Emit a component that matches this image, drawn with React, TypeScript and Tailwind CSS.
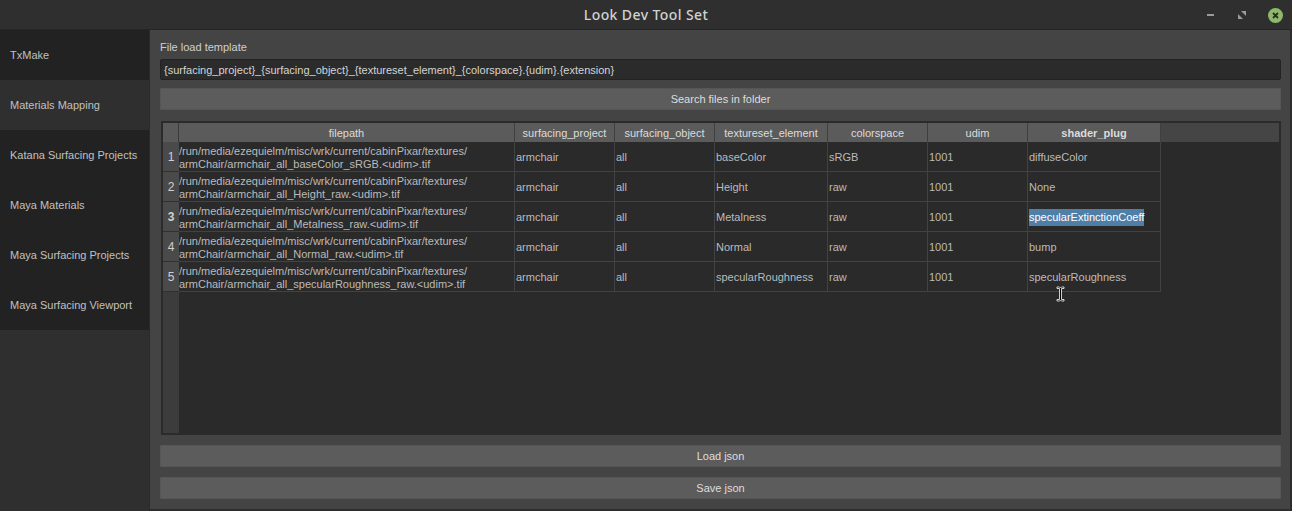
import React from "react";

const tabs = [
  "TxMake",
  "Materials Mapping",
  "Katana Surfacing Projects",
  "Maya Materials",
  "Maya Surfacing Projects",
  "Maya Surfacing Viewport",
];

const columns = [
  { name: "filepath", w: "w-[336px]" },
  { name: "surfacing_project", w: "w-[100px]" },
  { name: "surfacing_object", w: "w-[100px]" },
  { name: "textureset_element", w: "w-[113px]" },
  { name: "colorspace", w: "w-[100px]" },
  { name: "udim", w: "w-[100px]" },
  { name: "shader_plug", w: "w-[133px]" },
];

const base = "/run/media/ezequielm/misc/wrk/current/cabinPixar/textures/";

const rows = [
  ["armChair/armchair_all_baseColor_sRGB.<udim>.tif", "armchair", "all", "baseColor", "sRGB", "1001", "diffuseColor"],
  ["armChair/armchair_all_Height_raw.<udim>.tif", "armchair", "all", "Height", "raw", "1001", "None"],
  ["armChair/armchair_all_Metalness_raw.<udim>.tif", "armchair", "all", "Metalness", "raw", "1001", "specularExtinctionCoeff"],
  ["armChair/armchair_all_Normal_raw.<udim>.tif", "armchair", "all", "Normal", "raw", "1001", "bump"],
  ["armChair/armchair_all_specularRoughness_raw.<udim>.tif", "armchair", "all", "specularRoughness", "raw", "1001", "specularRoughness"],
];

function TitleBar() {
  return (
    <div className="h-[30px] flex items-center justify-center relative bg-[#2f2f2f] border-b border-[#252525]">
      <span className="text-[14px] font-medium text-[#d2d2d2] tracking-[0.4px] font-['Noto_Sans',sans-serif]">
        Look Dev Tool Set
      </span>
      <div className="absolute right-[9px] top-0 h-[30px] flex items-center gap-[16px]">
        <span className="w-[7px] h-[2px] bg-[#9a9a9a] mr-[8px]" />
        <svg width="8" height="8" viewBox="0 0 8 8" className="mr-[6px]">
          <path d="M3 0H8V5Z" fill="#9a9a9a" />
          <path d="M0 3V8H5Z" fill="#9a9a9a" />
        </svg>
        <span className="w-[15px] h-[15px] rounded-full bg-[#8fb86c] flex items-center justify-center">
          <svg width="7" height="7" viewBox="0 0 7 7">
            <path d="M1 1L6 6M6 1L1 6" stroke="#2b2b2b" strokeWidth="1.8" />
          </svg>
        </span>
      </div>
    </div>
  );
}

function Sidebar() {
  return (
    <div className="w-[150px] shrink-0 bg-[#2f2f2f] border-r border-[#2a2a2a] flex flex-col">
      {tabs.map((t, i) => (
        <div
          key={t}
          className={`h-[50px] flex items-center pl-[10px] pt-px text-[11px] text-[#c0c0c0] ${
            i === 1 ? "bg-[#2f2f2f]" : "bg-[#222222]"
          }`}
        >
          {t}
        </div>
      ))}
    </div>
  );
}

// text cursor drawn over the table
function IBeam() {
  return (
    <svg width="9" height="16" viewBox="0 0 9 16" className="absolute left-[893px] top-[163px]">
      <path
        d="M1 1H3.5L4.5 2L5.5 1H8V2.5H5.5V13.5H8V15H5.5L4.5 14L3.5 15H1V13.5H3.5V2.5H1Z"
        fill="#000"
        stroke="#fff"
        strokeWidth="0.8"
      />
    </svg>
  );
}

function Table() {
  return (
    <div className="relative mt-[11px] ml-[1px] h-[314px] border-2 border-[#2b2b2b] bg-[#2a2a2a] flex flex-col overflow-hidden">
      <div className="flex h-[19px] bg-[#454545]">
        <div className="w-[16px] bg-[#5a5a5a] border-r border-[#3a3a3a]" />
        {columns.map((c) => (
          <div
            key={c.name}
            className={`${c.w} shrink-0 bg-[#5b5b5b] border-r border-[#3f3f3f] pt-px flex items-center justify-center text-[#dcdcdc] ${
              c.name === "shader_plug" ? "font-bold" : ""
            }`}
          >
            {c.name}
          </div>
        ))}
      </div>
      <div className="flex flex-1">
        <div className="w-[16px] bg-[#3c3c3c] flex flex-col">
          {rows.map((_, i) => (
            <div
              key={i}
              className={`h-[30px] bg-[#4a4a4a] border-b border-[#303030] pt-px flex items-center justify-center text-[12px] text-[#d0d0d0] ${
                i === 2 ? "font-bold" : ""
              }`}
            >
              {i + 1}
            </div>
          ))}
        </div>
        <div className="flex flex-col">
          {rows.map((r, ri) => (
            <div key={ri} className="flex h-[30px]">
              {r.map((v, ci) => (
                <div
                  key={ci}
                  className={`${columns[ci].w} shrink-0 border-r border-b border-[#424242] pt-[2px] flex items-center text-[#bbbbbb] ${
                    ci === 0 ? "pl-0" : "pl-px"
                  }`}
                >
                  {ci === 0 ? (
                    <div className="leading-[13px]">
                      <div>{base}</div>
                      <div>{v}</div>
                    </div>
                  ) : ri === 2 && ci === 6 ? (
                    <span className="bg-[#4f7ea6] text-white">{v}</span>
                  ) : (
                    v
                  )}
                </div>
              ))}
            </div>
          ))}
        </div>
      </div>
      <IBeam />
    </div>
  );
}

function Btn({ label }: { label: string }) {
  return (
    <div className="h-[22px] bg-[#5c5c5c] border border-[#555] pt-px flex items-center justify-center text-[#dedede]">
      {label}
    </div>
  );
}

export default function App() {
  return (
    <div className="w-[1292px] h-[511px] bg-[#2f2f2f] flex flex-col font-['Liberation_Sans',Arial,sans-serif] text-[11px] overflow-hidden">
      <TitleBar />
      <div className="flex flex-1 min-h-0">
        <Sidebar />
        <div className="flex-1 bg-[#444444] border-r-2 border-b-2 border-[#2d2d2d] pl-[10px] pr-[9px] pt-[11px] flex flex-col">
          <div className="text-[#cfcfcf] h-[13px] leading-[13px]">File load template</div>
          <div className="mt-[5px] h-[21px] bg-[#2b2b2b] border border-[#232323] rounded-[2px] flex items-center pl-[3px] pt-px text-[#d4d4d4]">
            {"{surfacing_project}_{surfacing_object}_{textureset_element}_{colorspace}.{udim}.{extension}"}
          </div>
          <div className="mt-[8px]">
            <Btn label="Search files in folder" />
          </div>
          <Table />
          <div className="mt-[10px]">
            <Btn label="Load json" />
          </div>
          <div className="mt-[10px]">
            <Btn label="Save json" />
          </div>
        </div>
      </div>
    </div>
  );
}
